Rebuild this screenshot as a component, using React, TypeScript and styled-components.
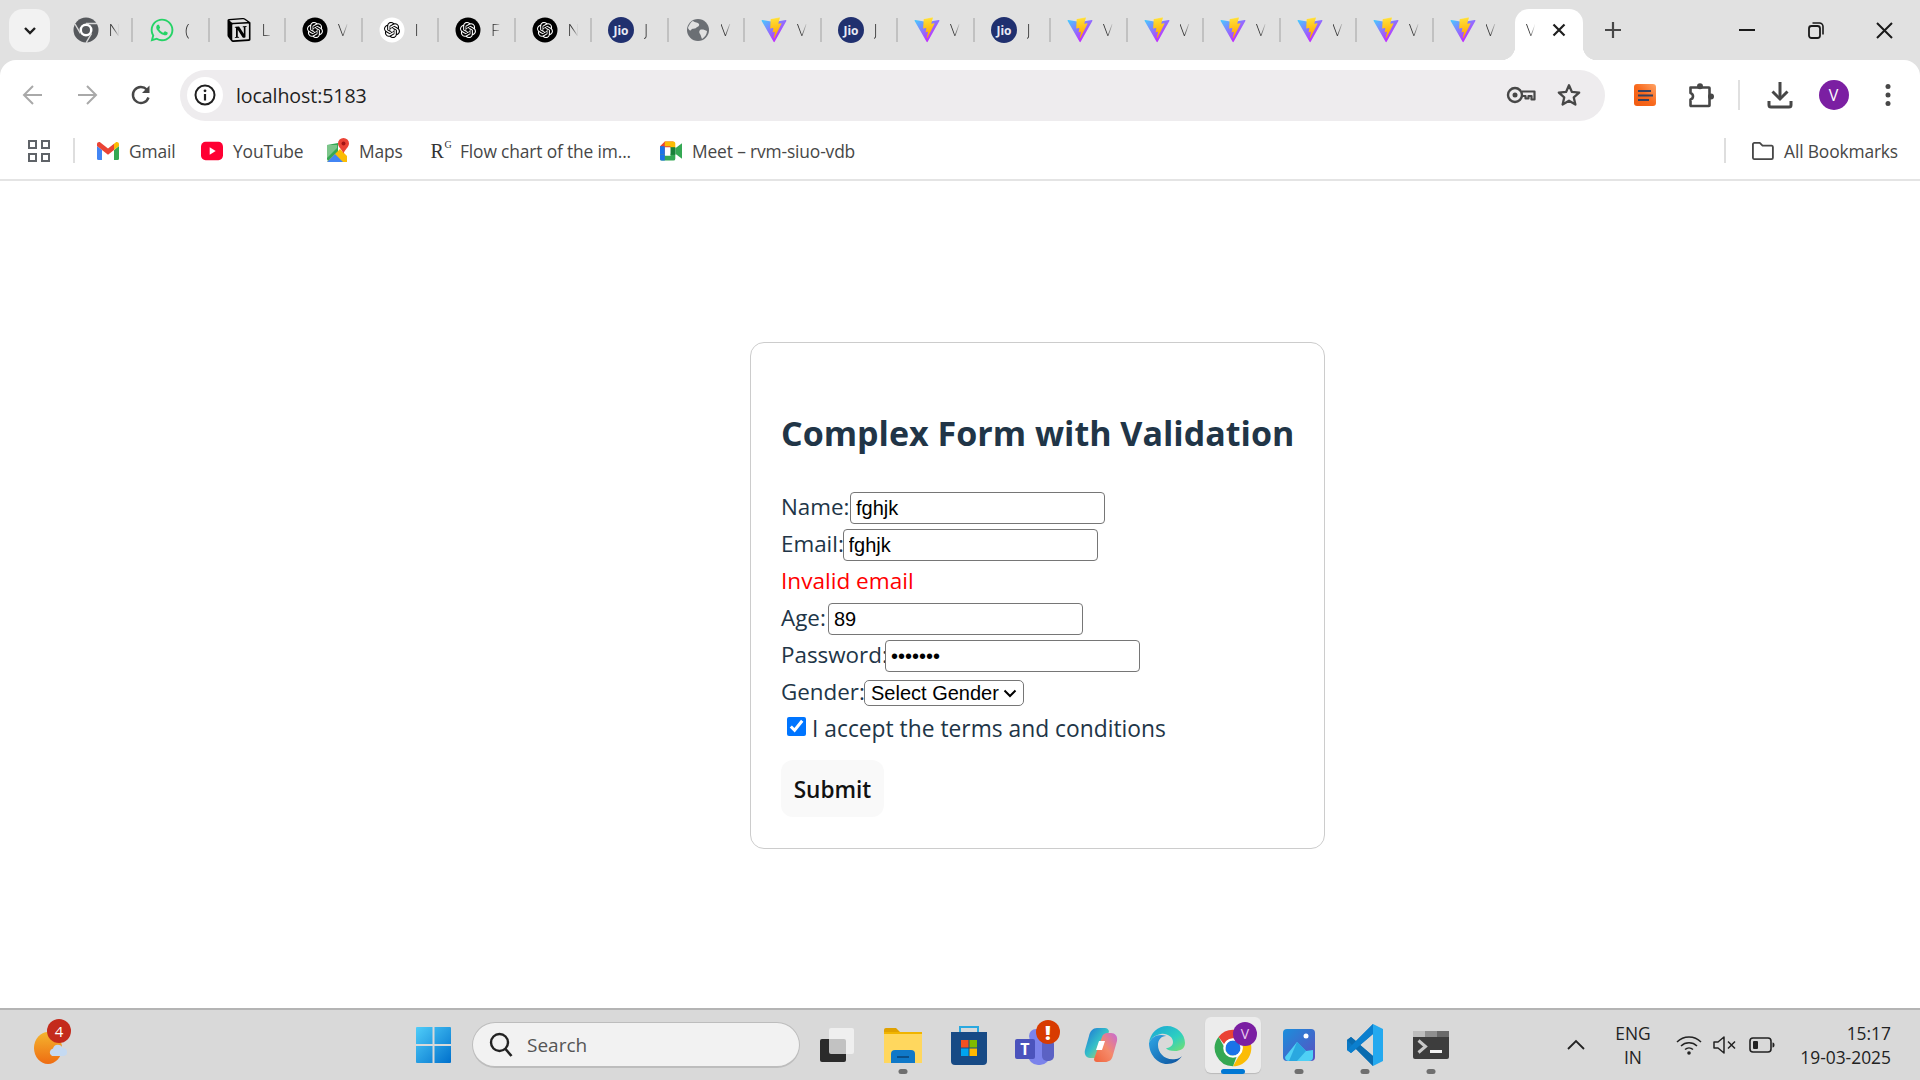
import React from "react";
import styled, { createGlobalStyle } from "styled-components";
import { SiOpenai, SiNotion } from "react-icons/si";
import { FaWhatsapp } from "react-icons/fa";

const UI = `"Open Sans", "Noto Sans", sans-serif`;
const chevron = `url("data:image/svg+xml,%3Csvg xmlns='http://www.w3.org/2000/svg' width='14' height='9' viewBox='0 0 14 9'%3E%3Cpath d='M1.500 1.500 7 7l5.500-5.500' fill='none' stroke='%23000' stroke-width='2'/%3E%3C/svg%3E")`;

const Global = createGlobalStyle`
  html, body { margin: 0; padding: 0; width: 1920px; height: 1080px; overflow: hidden; background: #fff; }
  * { box-sizing: border-box; }
`;

const Screen = styled.div`
  width: 1920px; height: 1080px; display: flex; flex-direction: column; font-family: ${UI}; background: #fff;
`;

/* ---------- tab strip ---------- */
const TabStrip = styled.div`
  height: 60px; flex: none; background: #e1e1e1; display: flex; align-items: flex-start;
`;
const Collapse = styled.div`
  width: 41px; height: 43px; margin: 9px 6.5px 0 9px; border-radius: 14px; background: #f2f2f2;
  display: flex; align-items: center; justify-content: center; flex: none;
`;
const Tab = styled.div<{ $last?: boolean }>`
  width: 76.5px; height: 24px; margin-top: 18px; flex: none; display: flex; align-items: center;
  padding-left: 16px; border-right: 2px solid ${(p) => (p.$last ? "transparent" : "#c1c1c1")};
`;
const FavBox = styled.div`
  width: 26px; height: 26px; flex: none; display: flex; align-items: center; justify-content: center;
`;
const TabLetter = styled.span`
  display: block; width: 10px; margin-left: 10px; overflow: hidden; font-size: 17px; font-weight: 300; line-height: 24px;
  color: #333; -webkit-mask-image: linear-gradient(90deg, #000 40%, transparent 100%); mask-image: linear-gradient(90deg, #000 40%, transparent 100%);
`;
const ActiveTab = styled.div`
  position: relative; width: 68px; height: 51px; margin: 9px 0 0 5px; flex: none; background: #fff; border-radius: 14px 14px 0 0;
  display: flex; align-items: flex-start; padding: 9px 0 0 11px;
  &::before, &::after { content: ""; position: absolute; bottom: 0; width: 14px; height: 14px; }
  &::before { left: -14px; background: radial-gradient(circle at 0 0, #e1e1e1 14px, #fff 14.5px); }
  &::after { right: -14px; background: radial-gradient(circle at 100% 0, #e1e1e1 14px, #fff 14.5px); }
`;
const ActiveLetter = styled(TabLetter)`
  margin-left: 0; width: 9px;
`;
const TabClose = styled.div`
  margin-left: 12px; width: 24px; height: 24px; display: flex; align-items: center; justify-content: center;
`;
const NewTab = styled.div`
  width: 36px; height: 36px; margin: 12px 0 0 12px; display: flex; align-items: center; justify-content: center; flex: none;
`;
const WinControls = styled.div`
  margin-left: auto; margin-right: 1px; display: flex; flex: none;
`;
const WinButton = styled.div`
  width: 69px; height: 60px; display: flex; align-items: center; justify-content: center;
`;

/* ---------- toolbar ---------- */
const ToolWrap = styled.div`
  background: #e1e1e1; flex: none;
`;
const Toolbar = styled.div`
  height: 70px; background: #fff; border-radius: 16px 16px 0 0; display: flex; align-items: center; padding-left: 6px;
`;
const NavButton = styled.div<{ $w?: number }>`
  width: ${(p) => p.$w ?? 54}px; height: 44px; flex: none; display: flex; align-items: center; justify-content: center;
`;
const Omnibox = styled.div`
  width: 1424.5px; height: 51px; margin: 0 12px; flex: none; border-radius: 26px; background: #eeecee;
  display: flex; align-items: center; padding: 0 11.5px 0 7px;
`;
const InfoChip = styled.div`
  width: 36px; height: 36px; border-radius: 50%; background: #fff; display: flex; align-items: center; justify-content: center; flex: none;
`;
const Url = styled.span`
  margin-left: 13px; flex: 1; font-size: 19.6px; color: #1f1f1f; letter-spacing: -0.1px;
`;
const ToolDivider = styled.div`
  width: 2px; height: 30px; background: #e0e0e0; margin: 0 13px 0 9px; flex: none;
`;
const Avatar = styled.div`
  width: 30px; height: 30px; border-radius: 50%; background: #7b1fa2; color: #fff; font-size: 16px;
  display: flex; align-items: center; justify-content: center;
`;

/* ---------- bookmarks ---------- */
const BookmarkBar = styled.div`
  height: 51px; flex: none; background: #fff; border-bottom: 2px solid #e4e4e4; display: flex; align-items: center; padding: 0 22px 8px 28px;
`;
const AppsGrid = styled.div`
  width: 22px; height: 22px; display: grid; grid-template-columns: 9px 9px; grid-template-rows: 9px 9px; gap: 4px; flex: none;
`;
const AppsCell = styled.span`
  border: 2px solid #5f6368; display: block;
`;
const BarDivider = styled.div<{ $l?: number; $auto?: boolean }>`
  width: 2px; height: 25px; background: #dedede; flex: none; margin-left: ${(p) => (p.$auto ? "auto" : `${p.$l ?? 0}px`)};
`;
const Bookmark = styled.div<{ $w?: number; $l?: number }>`
  width: ${(p) => (p.$w ? `${p.$w}px` : "auto")}; margin-left: ${(p) => p.$l ?? 0}px; flex: none; display: flex; align-items: center; gap: 10px;
  font-size: 17.4px; color: #474747; white-space: nowrap; letter-spacing: -0.15px;
`;
const BookIcon = styled.div`
  width: 22px; height: 24px; flex: none; display: flex; align-items: center; justify-content: center; overflow: visible;
`;
const RgMark = styled.span`
  font-family: "Liberation Serif", serif; font-size: 20px; color: #333; position: relative; line-height: 24px; margin-left: -4px;
  sup { font-size: 10px; position: absolute; top: -6px; left: 14px; }
`;

/* ---------- page ---------- */
const Page = styled.main`
  flex: 1; display: flex; align-items: center; padding-left: 750px; padding-top: 1px;
`;
const Card = styled.form`
  width: 575px; height: 507px; border: 1px solid #ccc; border-radius: 14px; padding: 61px 0 0 30px; color: #213547; font-family: ${UI};
`;
const Title = styled.h2`
  margin: 0 0 28px; height: 58px; line-height: 58px; font-size: 34px; font-weight: 700; white-space: nowrap; color: #213547;
`;
const Row = styled.div`
  height: 37px; display: flex; align-items: center; font-size: 22.4px;
`;
const FieldLabel = styled.label<{ $w: number }>`
  width: ${(p) => p.$w}px; flex: none; white-space: nowrap; margin-top: -4px; color: #213547;
`;
const TextInput = styled.input`
  width: 255px; height: 32px; border: 1px solid #767676; border-radius: 4px; padding: 1px 5px; font: 20px "Liberation Sans", Arial, sans-serif; color: #000; background: #fff; outline: none;
`;
const Select = styled.select`
  width: 160px; height: 26px; border: 1px solid #767676; border-radius: 5px; font: 20px "Liberation Sans", Arial, sans-serif; color: #000; padding: 0 0 0 6px;
  appearance: none; background: #fff ${chevron} no-repeat 138px 8px;
`;
const ErrorText = styled.div`
  height: 37px; display: flex; align-items: center; font-size: 22.6px; color: #ff0000; margin-top: -2px; margin-bottom: 2px;
`;
const CheckRow = styled.div`
  height: 33px; display: flex; align-items: center; font-size: 22.8px; color: #213547;
`;
const Check = styled.input`
  width: 19px; height: 19px; margin: -3px 6px 0 6px; flex: none;
`;
const Submit = styled.button`
  display: block; width: 103px; height: 57px; margin-top: 15px; border: none; border-radius: 12px; background: #f9f9f9;
  font: 600 22.6px ${UI}; color: #111; padding: 2px 0 0;
`;

/* ---------- taskbar ---------- */
const Taskbar = styled.footer`
  height: 72px; flex: none; background: #d9d9d9; border-top: 2px solid #b4b4b4; display: flex; align-items: center;
`;
const Weather = styled.div`
  position: relative; width: 40px; height: 50px; margin: 0 332px 0 28px; flex: none;
`;
const WeatherBadge = styled.span`
  position: absolute; left: 19px; top: -1px; width: 24px; height: 24px; border-radius: 50%; background: #c42b1c; color: #fff;
  font-size: 15px; display: flex; align-items: center; justify-content: center;
`;
const TaskItem = styled.div<{ $active?: boolean }>`
  position: relative; width: 66px; height: 56px; flex: none; display: flex; align-items: center; justify-content: center;
  &::before {
    content: ""; position: absolute; left: 5px; right: 5px; top: 0; bottom: 0; border-radius: 6px;
    background: ${(p) => (p.$active ? "#ececec" : "transparent")};
    box-shadow: ${(p) => (p.$active ? "0 1px 1px rgba(0,0,0,.15)" : "none")};
  }
  & > svg { position: relative; }
`;
const RunDot = styled.span<{ $active?: boolean }>`
  position: absolute; bottom: -1px; left: 50%; transform: translateX(-50%); height: 5px; border-radius: 3px;
  width: ${(p) => (p.$active ? 24 : 9)}px; background: ${(p) => (p.$active ? "#0078d4" : "#6f6f6f")};
`;
const SearchBox = styled.div`
  width: 328px; height: 46px; margin: 0 4px 0 6px; flex: none; border-radius: 23px; background: #f2f2f2; border: 1px solid #bdbdbd; border-bottom-width: 2px;
  display: flex; align-items: center; padding-left: 16px; gap: 14px; font-size: 19px; color: #555;
`;
const Tray = styled.div`
  margin-left: auto; margin-right: 29px; display: flex; align-items: center; flex: none;
`;
const TrayCell = styled.div<{ $w: number }>`
  width: ${(p) => p.$w}px; flex: none; display: flex; align-items: center; justify-content: center;
`;
const LangText = styled.div`
  width: 74px; text-align: center; font-size: 17.4px; line-height: 24px; color: #222;
`;
const Clock = styled.div`
  width: 109px; text-align: right; font-size: 17.4px; line-height: 24px; color: #222; white-space: nowrap;
`;

/* ---------- drawings ---------- */
const Chrome = ({ size = 40 }: { size?: number }) => (
  <svg width={size} height={size} viewBox="0 0 48 48">
    <path d="M24 2a22 22 0 0 1 19.05 11H24a11 11 0 0 0-10.2 6.9L6.6 10.7A22 22 0 0 1 24 2z" fill="#ea4335" />
    <path d="M43.05 13A22 22 0 0 1 24 46l9.5-16.5A11 11 0 0 0 33 16.5z" fill="#fbbc04" />
    <path d="M6.6 10.7 16 27a10 10 0 0 0 13 5.5L24 46A22 22 0 0 1 6.6 10.7z" fill="#34a853" />
    <circle cx="24" cy="24" r="9" fill="#1a73e8" />
    <circle cx="24" cy="24" r="10.5" fill="none" stroke="#fff" strokeWidth="2.5" />
  </svg>
);
const GreyChrome = () => (
  <svg width="26" height="26" viewBox="0 0 26 26">
    <circle cx="13" cy="13" r="12.500" fill="#55585c" />
    <circle cx="13" cy="13" r="6.500" fill="#fff" />
    <circle cx="13" cy="13" r="4" fill="#55585c" />
    <path d="M13 6.500h11M7.400 16.300 2 7M18.600 16.300l-5.500 9.500" stroke="#d9d9d9" strokeWidth="1.400" />
  </svg>
);
const Vite = ({ size = 26 }: { size?: number }) => (
  <svg width={size} height={size} viewBox="0 0 410 404">
    <defs>
      <linearGradient id="va" x1="6" y1="33" x2="235" y2="344" gradientUnits="userSpaceOnUse">
        <stop stopColor="#41D1FF" />
        <stop offset="1" stopColor="#BD34FE" />
      </linearGradient>
      <linearGradient id="vb" x1="194.65" y1="8.818" x2="236.076" y2="292.989" gradientUnits="userSpaceOnUse">
        <stop stopColor="#FFEA83" />
        <stop offset=".083" stopColor="#FFDD35" />
        <stop offset="1" stopColor="#FFA800" />
      </linearGradient>
    </defs>
    <path fill="url(#va)" d="M399.641 59.525 215.643 388.545c-3.799 6.793-13.559 6.833-17.415.073L10.582 59.556C6.38 52.19 12.68 43.266 21.028 44.76l184.195 32.923c1.175.21 2.378.208 3.553-.006l180.343-32.87c8.32-1.517 14.649 7.337 10.522 14.719Z" />
    <path fill="url(#vb)" d="M292.965 1.574 156.801 28.255a5 5 0 0 0-4.03 4.611l-8.376 141.464c-.197 3.332 2.863 5.918 6.115 5.168l37.91-8.749c3.547-.818 6.752 2.306 6.023 5.873l-11.263 55.153c-.758 3.712 2.727 6.886 6.352 5.785l23.415-7.114c3.63-1.102 7.118 2.081 6.35 5.796l-17.899 86.633c-1.12 5.419 6.088 8.374 9.094 3.728l2.008-3.103 110.954-221.428c1.858-3.707-1.346-7.935-5.418-7.15l-39.022 7.532c-3.667.707-6.787-2.708-5.752-6.296l25.469-88.291c1.036-3.594-2.095-7.012-5.766-6.293Z" />
  </svg>
);
const Jio = () => (
  <svg width="26" height="26" viewBox="0 0 26 26">
    <circle cx="13" cy="13" r="13" fill="#20306f" />
    <text x="13" y="17.500" textAnchor="middle" fontSize="12" fontWeight="700" fontFamily="'Open Sans', sans-serif" fill="#e8eaf5">Jio</text>
  </svg>
);
const Gpt = ({ light = false }: { light?: boolean }) => (
  <svg width="26" height="26" viewBox="0 0 26 26">
    <circle cx="13" cy="13" r="12.500" fill={light ? "#fff" : "#000"} />
    <g transform="translate(5 5)" color={light ? "#000" : "#fff"}>
      <SiOpenai size={16} />
    </g>
  </svg>
);
const Globe = () => (
  <svg width="24" height="24" viewBox="0 0 24 24">
    <circle cx="12" cy="12" r="11" fill="#6b6f74" />
    <path d="M7 3c2 2 5 1 6 3s-2 3-3 4-4 0-5 2-3-2-3-2 2-6 5-7zM14 12c2-1 5 0 7 1 0 3-2 6-5 8-1-2-1-4-2-5s-1-3 0-4z" fill="#e1e1e1" />
  </svg>
);
const Gmail = () => (
  <svg width="22" height="18" viewBox="0 0 22 18">
    <path d="M0 4v12.500A1.500 1.500 0 0 0 1.500 18H5V8z" fill="#4285f4" />
    <path d="M22 4v12.500a1.500 1.500 0 0 1-1.500 1.500H17V8z" fill="#34a853" />
    <path d="M5 8 0 4V2.200C0 .5 2 -.6 3.400.5L11 6.500l6-4.700V8l-6 4.700z" fill="#ea4335" />
    <path d="M17 8V1.800l1.600-1.300C20 -.6 22 .5 22 2.200V4z" fill="#fbbc04" />
  </svg>
);
const YouTube = () => (
  <svg width="24" height="20" viewBox="0 0 24 20">
    <rect width="24" height="20" rx="5" fill="#ff0033" />
    <path d="M9.500 6v8l6.500-4z" fill="#fff" />
  </svg>
);
const Maps = () => (
  <svg width="22" height="26" viewBox="0 0 22 26">
    <path d="M0 7 11 5v18H2a2 2 0 0 1-2-2z" fill="#34a853" />
    <path d="M0 24 13 11l7 7v6z" fill="#fbbc04" />
    <path d="M0 24 8 16l8 8z" fill="#4285f4" />
    <path d="M0 7h10v3L0 20z" fill="#7cc58a" />
    <path d="M16.500 0a5.500 5.500 0 0 1 5.500 5.500c0 3.500-4 6-5.500 10-1.500-4-5.500-6.500-5.500-10A5.500 5.500 0 0 1 16.500 0z" fill="#ea4335" />
    <circle cx="16.500" cy="5.500" r="2" fill="#a31515" />
  </svg>
);
const Meet = () => (
  <svg width="23" height="20" viewBox="0 0 23 20">
    <path d="M5 0h9v6H5v8H0V5z" fill="#ea4335" />
    <path d="M0 5h5v9H0z" fill="#1a73e8" />
    <path d="M5 0h9a2 2 0 0 1 2 2v5h-5V5H5z" fill="#fbbc04" />
    <path d="M0 14h5v1h6v-2h5v5a2 2 0 0 1-2 2H2a2 2 0 0 1-2-2z" fill="#34a853" />
    <path d="M0 14h5v6H2a2 2 0 0 1-2-2z" fill="#1a73e8" />
    <path d="M16 7l7-5v16l-7-5z" fill="#34a853" />
    <path d="M11 6h5v8h-5z" fill="#188038" />
  </svg>
);
const stroke = { fill: "none", stroke: "#474747", strokeWidth: 2, strokeLinecap: "round", strokeLinejoin: "round" } as const;
const Arrow = ({ dir, color }: { dir: "l" | "r"; color: string }) => (
  <svg width="24" height="24" viewBox="0 0 24 24" style={{ transform: dir === "r" ? "scaleX(-1)" : undefined }}>
    <path d="M21 12H4M12 3l-9 9 9 9" fill="none" stroke={color} strokeWidth="2" />
  </svg>
);
const Reload = () => (
  <svg width="24" height="24" viewBox="0 0 24 24">
    <path d="M19.500 14.500A8 8 0 1 1 17.800 6.500" {...stroke} strokeWidth={2.4} strokeLinecap="butt" />
    <path d="M20.500 2.500v7.500h-7.500z" fill="#474747" />
  </svg>
);
const Key = () => (
  <svg width="30" height="20" viewBox="0 0 30 20">
    <circle cx="9" cy="10" r="7" fill="none" stroke="#474747" strokeWidth="2.400" />
    <circle cx="9" cy="10" r="2.500" fill="#474747" />
    <path d="M16 6.500h12.500v8h-3v-3.500h-3v2.500h-3v-2.500H16" fill="none" stroke="#474747" strokeWidth="2.200" strokeLinejoin="round" />
  </svg>
);
const Star = () => (
  <svg width="26" height="26" viewBox="0 0 24 24">
    <path d="m12 3 2.700 6.200 6.700.6-5 4.400 1.500 6.600L12 17.300 6.100 20.800l1.500-6.600-5-4.400 6.700-.6z" {...stroke} strokeWidth={2.100} />
  </svg>
);
const Puzzle = () => (
  <svg width="26" height="25" viewBox="0 0 26 25">
    <circle cx="12" cy="3.200" r="3" fill="#474747" />
    <circle cx="23" cy="13.500" r="3" fill="#474747" />
    <path d="M2.500 4.500h18.500a.5.5 0 0 1 .5.5v17.500a.5.5 0 0 1-.5.5H3a.5.5 0 0 1-.5-.5v-6a3.500 3.500 0 0 0 2.500-3.300 3.500 3.500 0 0 0-2.500-3.300z" {...stroke} strokeWidth={2.600} />
  </svg>
);
const Download = () => (
  <svg width="26" height="28" viewBox="0 0 26 28">
    <path d="M13 1v15" stroke="#474747" strokeWidth="3" />
    <path d="M5.500 10.500 13 18l7.500-7.500" fill="none" stroke="#474747" strokeWidth="3" />
    <path d="M2 20v4a2 2 0 0 0 2 2h18a2 2 0 0 0 2-2v-4" fill="none" stroke="#474747" strokeWidth="3" />
  </svg>
);
const OrangeNote = () => (
  <svg width="22" height="22" viewBox="0 0 22 22">
    <defs>
      <linearGradient id="orn" x1="1" y1="0" x2="0" y2="1">
        <stop stopColor="#ffa466" />
        <stop offset=".5" stopColor="#f8691d" />
        <stop offset="1" stopColor="#f05a10" />
      </linearGradient>
    </defs>
    <rect width="22" height="22" rx="3" fill="url(#orn)" />
    <path d="M4 7h13M4 11.500h15M4 16h11" stroke="#37415f" strokeWidth="2" />
  </svg>
);
const Win = () => (
  <svg width="35" height="36" viewBox="0 0 35 36">
    <defs>
      <linearGradient id="win" x1="0" y1="0" x2="1" y2="1">
        <stop stopColor="#4fcdf9" />
        <stop offset="1" stopColor="#0070cc" />
      </linearGradient>
    </defs>
    <path d="M1 0h15.500v17H0V1a1 1 0 0 1 1-1zM18.500 0H34a1 1 0 0 1 1 1v16H18.500zM0 19h16.500v17H1a1 1 0 0 1-1-1zM18.500 19H35v16a1 1 0 0 1-1 1H18.500z" fill="url(#win)" />
  </svg>
);
const TaskView = () => (
  <svg width="36" height="36" viewBox="0 0 36 36">
    <rect x="1" y="12" width="26" height="23" rx="2" fill="#2b2b2b" />
    <rect x="10" y="1" width="25" height="26" rx="2" fill="#f5f5f5" fillOpacity=".75" />
  </svg>
);
const Explorer = () => (
  <svg width="38" height="36" viewBox="0 0 38 36">
    <path d="M0 3a2 2 0 0 1 2-2h10l4 4h-16z" fill="#e0a100" />
    <path d="M0 5h38v31H0z" fill="#ffd75e" />
    <path d="M0 5h38v2H0z" fill="#f0b400" />
    <path d="M7 36v-9a4 4 0 0 1 4-4h16a4 4 0 0 1 4 4v9z" fill="#0f78c8" />
    <path d="M13 30h12" stroke="#0a4f8a" strokeWidth="2" />
  </svg>
);
const Store = () => (
  <svg width="36" height="40" viewBox="0 0 36 40">
    <path d="M9 8V2h18v6" fill="none" stroke="#2aa9e0" strokeWidth="2" />
    <path d="M0 7h36v29a4 4 0 0 1-4 4H4a4 4 0 0 1-4-4z" fill="#174a85" />
    <rect x="10" y="15" width="7.500" height="7.500" fill="#f25022" />
    <rect x="18.500" y="15" width="7.500" height="7.500" fill="#7fba00" />
    <rect x="10" y="23.500" width="7.500" height="7.500" fill="#00a4ef" />
    <rect x="18.500" y="23.500" width="7.500" height="7.500" fill="#ffb900" />
  </svg>
);
const Teams = () => (
  <svg width="46" height="50" viewBox="0 0 46 50" style={{ overflow: "visible" }}>
    <g transform="translate(2 0)">
      <circle cx="22" cy="16" r="7" fill="#7b83eb" />
      <rect x="14" y="17" width="22" height="28" rx="10" fill="#7b83eb" />
      <rect x="28" y="19" width="12" height="22" rx="5" fill="#5b62c4" />
      <rect x="1" y="19" width="20" height="20" rx="2" fill="#4b53bc" />
      <text x="11" y="35" textAnchor="middle" fontSize="16" fontWeight="700" fontFamily="'Open Sans', sans-serif" fill="#fff">T</text>
      <circle cx="34" cy="12" r="12" fill="#d83b01" />
      <text x="34" y="20" textAnchor="middle" fontSize="20" fontWeight="800" fontFamily="'Open Sans', sans-serif" fill="#fff">!</text>
    </g>
  </svg>
);
const Copilot = () => (
  <svg width="36" height="36" viewBox="0 0 36 36">
    <defs>
      <linearGradient id="cpa" x1="0" y1="0" x2="1" y2="1">
        <stop stopColor="#1b6fd8" />
        <stop offset=".5" stopColor="#35c0c8" />
        <stop offset="1" stopColor="#f3d13a" />
      </linearGradient>
      <linearGradient id="cpb" x1="1" y1="0" x2="0" y2="1">
        <stop stopColor="#c66ad6" />
        <stop offset=".5" stopColor="#f58a6a" />
        <stop offset="1" stopColor="#f0643c" />
      </linearGradient>
    </defs>
    <path d="M14 1h8c2 0 3 1 4 3l-6 24c-1 2-3 3-5 3H7C3 31 1 27 2 23l4-14c1-5 4-8 8-8z" fill="url(#cpa)" />
    <path d="M24 6h4c4 0 7 3 6 8l-4 14c-1 5-4 7-8 7h-8c-2 0-3-1-3-3l8-22c1-3 3-4 5-4z" fill="url(#cpb)" />
    <path d="M16 14h6l-3 9h-6z" fill="#fff" />
  </svg>
);
const Edge = () => (
  <svg width="36" height="38" viewBox="0 0 36 38">
    <defs>
      <linearGradient id="edA" x1="0" y1="0" x2="1" y2="1">
        <stop stopColor="#1aa3d8" />
        <stop offset=".6" stopColor="#2ed0c0" />
        <stop offset="1" stopColor="#7be06a" />
      </linearGradient>
      <linearGradient id="edB" x1="0" y1="0" x2="1" y2="1">
        <stop stopColor="#2fa8e8" />
        <stop offset="1" stopColor="#0c4f9a" />
      </linearGradient>
    </defs>
    <path d="M18 0c10 0 18 8 18 17 0 6-5 8-10 8-5 0-8-1-9-3 3 0 7-2 7-6 0-5-6-9-12-8C6 9 2 12 0 17 1 7 9 0 18 0z" fill="url(#edA)" />
    <path d="M0 17c2-5 6-8 12-8 3 0 5 1 5 1-5 0-8 4-8 9 0 8 7 16 18 14 2 0 5-2 6-3-3 5-9 8-15 8C8 38 0 28 0 17z" fill="url(#edB)" />
  </svg>
);
const ChromeProfile = () => (
  <svg width="46" height="46" viewBox="0 0 46 46" style={{ overflow: "visible" }}>
    <g transform="translate(3 6)"><Chrome size={40} /></g>
    <circle cx="35" cy="12" r="12" fill="#7b1fa2" />
    <text x="35" y="17" textAnchor="middle" fontSize="14" fontFamily="'Open Sans', sans-serif" fill="#e8c9f0">V</text>
  </svg>
);
const Photos = () => (
  <svg width="32" height="32" viewBox="0 0 32 32">
    <defs>
      <linearGradient id="phA" x1="0" y1="0" x2="1" y2="1">
        <stop stopColor="#1a8fdc" />
        <stop offset="1" stopColor="#5b4fc0" />
      </linearGradient>
    </defs>
    <rect width="32" height="32" rx="4" fill="url(#phA)" />
    <circle cx="23" cy="7" r="2.500" fill="#fff" />
    <path d="M2 28 14 13l9 9 7-1v7a4 4 0 0 1-4 4H6a4 4 0 0 1-4-4z" fill="#4fd0f5" />
    <path d="M14 13l9 9-9 10H6z" fill="#2aa8e0" />
  </svg>
);
const VsCode = () => (
  <svg width="36" height="42" viewBox="0 0 36 42">
    <path d="M26 0 36 5v32l-10 5z" fill="#24a9ef" />
    <path d="M26 0v10L13 21l13 11v10L9 25l-5 4-4-3v-10l4-3 5 4z" fill="#0b78c4" />
    <path d="M0 16l4-3 22 19v10L9 25z" fill="#0a6cb0" />
    <path d="M0 26l4 3L26 10V0L9 17z" fill="#0b7fce" />
  </svg>
);
const Terminal = () => (
  <svg width="36" height="28" viewBox="0 0 36 28">
    <rect width="36" height="28" rx="2" fill="#3d3d3d" />
    <rect width="12" height="6" fill="#bdbdbd" />
    <rect x="12" width="12" height="6" fill="#8f8f8f" />
    <rect x="24" width="12" height="6" fill="#6a6a6a" />
    <path d="m5.500 9.500 7 6-7 6" fill="none" stroke="#c9c9c9" strokeWidth="3" />
    <path d="M17 20.500h12" stroke="#f2f2f2" strokeWidth="3" />
  </svg>
);

type TabKind = "chrome" | "wa" | "notion" | "gpt" | "gptw" | "jio" | "globe" | "vite";
const tabs: [TabKind, string][] = [
  ["chrome", "N"], ["wa", "("], ["notion", "L"], ["gpt", "V"], ["gptw", "I"], ["gpt", "F"], ["gpt", "N"],
  ["jio", "J"], ["globe", "V"], ["vite", "V"], ["jio", "J"], ["vite", "V"], ["jio", "J"], ["vite", "V"],
  ["vite", "V"], ["vite", "V"], ["vite", "V"], ["vite", "V"], ["vite", "V"],
];
const fav = (k: TabKind) => {
  switch (k) {
    case "chrome": return <GreyChrome />;
    case "wa": return <FaWhatsapp size={26} color="#25d366" />;
    case "notion": return <SiNotion size={24} color="#000" />;
    case "gpt": return <Gpt />;
    case "gptw": return <Gpt light />;
    case "jio": return <Jio />;
    case "globe": return <Globe />;
    default: return <Vite />;
  }
};

export default function App() {
  return (
    <Screen>
      <Global />
      <TabStrip>
        <Collapse>
          <svg width="16" height="16" viewBox="0 0 16 16"><path d="m3 5 5 5 5-5" fill="none" stroke="#1f1f1f" strokeWidth="2.400" /></svg>
        </Collapse>
        {tabs.map(([k, l], i) => (
          <Tab key={i} $last={i === tabs.length - 1}>
            <FavBox>{fav(k)}</FavBox>
            <TabLetter>{l}</TabLetter>
          </Tab>
        ))}
        <ActiveTab>
          <ActiveLetter>V</ActiveLetter>
          <TabClose>
            <svg width="14" height="14" viewBox="0 0 14 14"><path d="m1.500 1.500 11 11M12.500 1.500l-11 11" stroke="#1f1f1f" strokeWidth="2.200" /></svg>
          </TabClose>
        </ActiveTab>
        <NewTab>
          <svg width="18" height="18" viewBox="0 0 18 18"><path d="M9 1v16M1 9h16" stroke="#474747" strokeWidth="2.200" /></svg>
        </NewTab>
        <WinControls>
          <WinButton><svg width="16" height="4" viewBox="0 0 16 4"><path d="M0 2h16" stroke="#1a1a1a" strokeWidth="2" /></svg></WinButton>
          <WinButton>
            <svg width="16" height="17" viewBox="0 0 16 17">
              <rect x="1" y="4" width="11" height="12" rx="2.500" fill="none" stroke="#1a1a1a" strokeWidth="1.800" />
              <path d="M4.500 1h7a3.500 3.500 0 0 1 3.500 3.500v8" fill="none" stroke="#1a1a1a" strokeWidth="1.600" />
            </svg>
          </WinButton>
          <WinButton><svg width="17" height="17" viewBox="0 0 17 17"><path d="m1 1 15 15M16 1 1 16" stroke="#1a1a1a" strokeWidth="2" /></svg></WinButton>
        </WinControls>
      </TabStrip>

      <ToolWrap>
        <Toolbar>
          <NavButton><Arrow dir="l" color="#a9a9a9" /></NavButton>
          <NavButton><Arrow dir="r" color="#a9a9a9" /></NavButton>
          <NavButton><Reload /></NavButton>
          <Omnibox>
            <InfoChip>
              <svg width="22" height="22" viewBox="0 0 22 22">
                <circle cx="11" cy="11" r="9.500" fill="none" stroke="#1f1f1f" strokeWidth="2" />
                <path d="M11 10v6.500" stroke="#1f1f1f" strokeWidth="2.200" />
                <circle cx="11" cy="6.800" r="1.400" fill="#1f1f1f" />
              </svg>
            </InfoChip>
            <Url>localhost:5183</Url>
            <NavButton $w={48}><Key /></NavButton>
            <NavButton $w={48}><Star /></NavButton>
          </Omnibox>
          <NavButton $w={56}><OrangeNote /></NavButton>
          <NavButton $w={56}><Puzzle /></NavButton>
          <ToolDivider />
          <NavButton><Download /></NavButton>
          <NavButton><Avatar>V</Avatar></NavButton>
          <NavButton>
            <svg width="6" height="24" viewBox="0 0 6 24"><circle cx="3" cy="3.500" r="2.500" fill="#474747" /><circle cx="3" cy="12" r="2.500" fill="#474747" /><circle cx="3" cy="20.500" r="2.500" fill="#474747" /></svg>
          </NavButton>
        </Toolbar>
      </ToolWrap>

      <BookmarkBar>
        <AppsGrid><AppsCell /><AppsCell /><AppsCell /><AppsCell /></AppsGrid>
        <BarDivider $l={23} />
        <Bookmark $w={104} $l={22}><BookIcon><Gmail /></BookIcon>Gmail</Bookmark>
        <Bookmark $w={126}><BookIcon><YouTube /></BookIcon>YouTube</Bookmark>
        <Bookmark $w={101}><BookIcon><Maps /></BookIcon>Maps</Bookmark>
        <Bookmark $w={232}><BookIcon><RgMark>R<sup>G</sup></RgMark></BookIcon>Flow chart of the im...</Bookmark>
        <Bookmark><BookIcon><Meet /></BookIcon>Meet – rvm-siuo-vdb</Bookmark>
        <BarDivider $auto />
        <Bookmark $l={26}>
          <BookIcon>
            <svg width="24" height="20" viewBox="0 0 24 20"><path d="M2.500 1.200h6l3 3h10a1.500 1.500 0 0 1 1.300 1.500v11.600a1.500 1.500 0 0 1-1.500 1.500h-19A1.500 1.500 0 0 1 1 17.300V2.700a1.500 1.500 0 0 1 1.500-1.500z" {...stroke} /></svg>
          </BookIcon>
          All Bookmarks
        </Bookmark>
      </BookmarkBar>

      <Page>
        <Card onSubmit={(e) => e.preventDefault()}>
          <Title>Complex Form with Validation</Title>
          <Row><FieldLabel $w={69}>Name:</FieldLabel><TextInput type="text" defaultValue="fghjk" /></Row>
          <Row><FieldLabel $w={61.5}>Email:</FieldLabel><TextInput type="text" defaultValue="fghjk" /></Row>
          <ErrorText>Invalid email</ErrorText>
          <Row><FieldLabel $w={47}>Age:</FieldLabel><TextInput type="text" defaultValue="89" /></Row>
          <Row><FieldLabel $w={104}>Password:</FieldLabel><TextInput type="password" defaultValue="1234567" /></Row>
          <Row>
            <FieldLabel $w={83}>Gender:</FieldLabel>
            <Select defaultValue="">
              <option value="">Select Gender</option>
            </Select>
          </Row>
          <CheckRow><Check type="checkbox" defaultChecked />I accept the terms and conditions</CheckRow>
          <Submit type="submit">Submit</Submit>
        </Card>
      </Page>

      <Taskbar>
        <Weather>
          <svg width="40" height="50" viewBox="0 0 40 50">
            <defs>
              <linearGradient id="sun" x1="0" y1="0" x2="0" y2="1">
                <stop stopColor="#f5b52e" />
                <stop offset="1" stopColor="#ee6c12" />
              </linearGradient>
            </defs>
            <ellipse cx="20" cy="28" rx="14" ry="16" fill="url(#sun)" />
            <path d="M24 36a4 4 0 0 1 1-7.500 5 5 0 0 1 9.500-.5 4 4 0 0 1 1 8z" fill="#c5daf2" />
          </svg>
          <WeatherBadge>4</WeatherBadge>
        </Weather>
        <TaskItem><Win /></TaskItem>
        <SearchBox>
          <svg width="24" height="26" viewBox="0 0 24 26">
            <circle cx="10.500" cy="10.500" r="8.500" fill="none" stroke="#222" strokeWidth="2.400" />
            <path d="m16.500 17 6 7" stroke="#222" strokeWidth="2.600" />
          </svg>
          Search
        </SearchBox>
        <TaskItem><TaskView /></TaskItem>
        <TaskItem><Explorer /><RunDot /></TaskItem>
        <TaskItem><Store /></TaskItem>
        <TaskItem><Teams /></TaskItem>
        <TaskItem><Copilot /></TaskItem>
        <TaskItem><Edge /></TaskItem>
        <TaskItem $active><ChromeProfile /><RunDot $active /></TaskItem>
        <TaskItem><Photos /><RunDot /></TaskItem>
        <TaskItem><VsCode /><RunDot /></TaskItem>
        <TaskItem><Terminal /><RunDot /></TaskItem>
        <Tray>
          <TrayCell $w={40}>
            <svg width="18" height="12" viewBox="0 0 18 12"><path d="m1 10 8-8 8 8" fill="none" stroke="#222" strokeWidth="1.800" /></svg>
          </TrayCell>
          <LangText>ENG<br />IN</LangText>
          <TrayCell $w={38}>
            <svg width="26" height="20" viewBox="0 0 26 20">
              <path d="M1 7a17 17 0 0 1 24 0M5 11a11.500 11.500 0 0 1 16 0M9 14.500a6 6 0 0 1 8 0" fill="none" stroke="#222" strokeWidth="1.500" />
              <circle cx="13" cy="18" r="1.800" fill="#222" />
            </svg>
          </TrayCell>
          <TrayCell $w={34}>
            <svg width="24" height="20" viewBox="0 0 24 20">
              <path d="M1 7v6h4l6 5V2L5 7z" fill="none" stroke="#222" strokeWidth="1.500" strokeLinejoin="round" />
              <path d="m15 6.500 7 7M22 6.500l-7 7" stroke="#222" strokeWidth="1.500" />
            </svg>
          </TrayCell>
          <TrayCell $w={40}>
            <svg width="26" height="16" viewBox="0 0 26 16">
              <rect x="1" y="1" width="21" height="14" rx="3" fill="none" stroke="#222" strokeWidth="1.600" />
              <rect x="4" y="4" width="5" height="8" rx="1" fill="#222" />
              <path d="M23.500 5.500c1.500 0 2 1 2 2.500s-.5 2.500-2 2.500z" fill="#222" />
            </svg>
          </TrayCell>
          <Clock>15:17<br />19-03-2025</Clock>
        </Tray>
      </Taskbar>
    </Screen>
  );
}
